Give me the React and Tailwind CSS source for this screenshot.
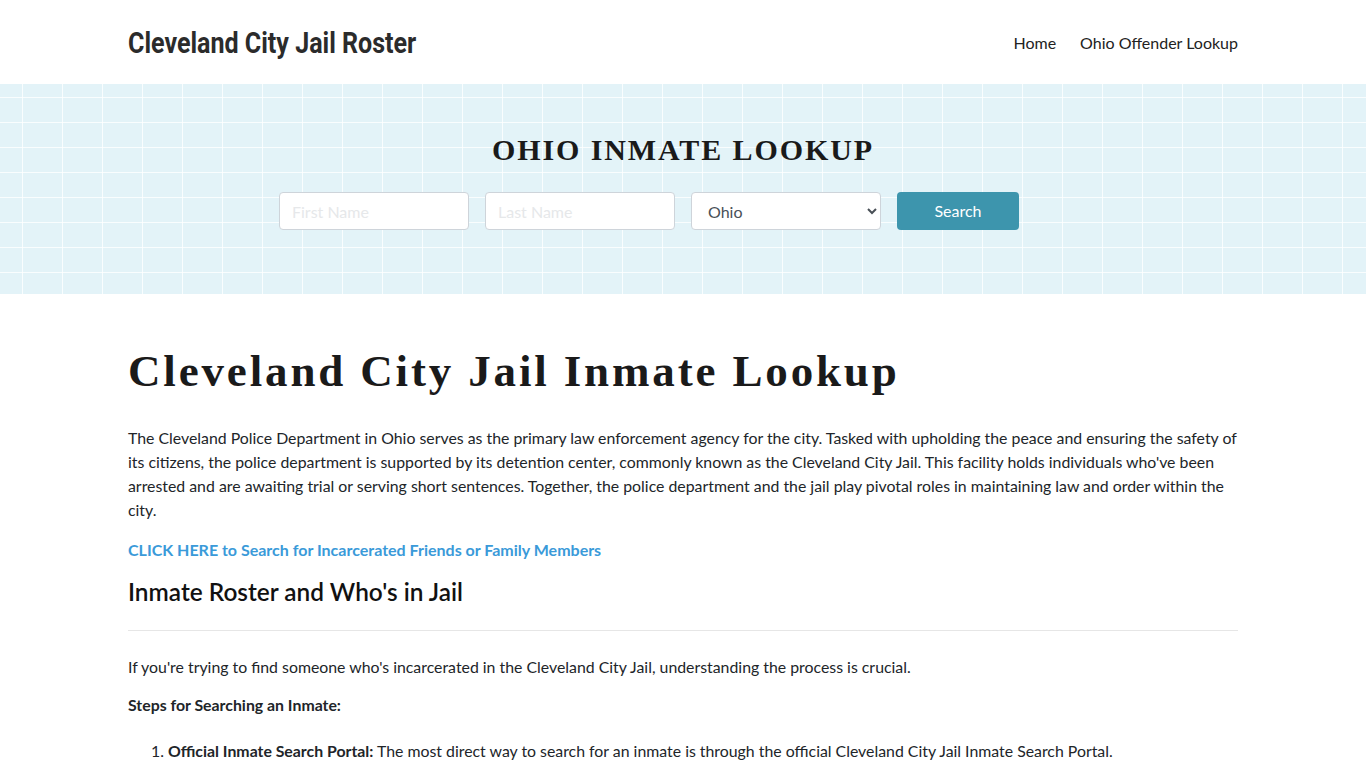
import React, { useState } from 'react';

const lato = "font-['Lato','Liberation_Sans',sans-serif]";
const serif = "font-['Liberation_Serif','DejaVu_Serif',serif]";

const Header = () => (
  <header className="bg-white">
    <div className="max-w-[1140px] mx-auto px-[15px] h-[84px] flex items-center justify-between">
      <a
        href="#"
        className="inline-block origin-left scale-x-[0.835] font-['Roboto','Liberation_Sans',sans-serif] font-bold text-[30px] leading-[34px] mt-[2px] text-[#2b2b2b] whitespace-nowrap"
      >
        Cleveland City Jail Roster
      </a>
      <nav className={`${lato} flex items-center gap-[24px] text-[16px] text-[#222] mt-[2px]`}>
        <a href="#">Home</a>
        <a href="#">Ohio Offender Lookup</a>
      </nav>
    </div>
  </header>
);

const SearchHero = () => {
  const [first, setFirst] = useState('');
  const [last, setLast] = useState('');
  const [state, setState] = useState('Ohio');

  const field =
    'w-[190px] h-[38px] px-3 bg-white border border-[#ced4da] rounded-[4px] text-[16px] text-[#495057] placeholder:text-[#e6e8ea] outline-none';

  return (
    <section className="bg-[#e3f3f8] bg-[linear-gradient(to_right,rgba(255,255,255,0.8)_1px,transparent_1px),linear-gradient(to_bottom,rgba(255,255,255,0.8)_1px,transparent_1px)] bg-[size:40px_25px] bg-[position:22px_13px] h-[210px] pt-[50px]">
      <h2 className={`${serif} text-center font-bold text-[30px] leading-[32px] tracking-[1.9px] text-[#1a1a1a]`}>
        OHIO INMATE LOOKUP
      </h2>
      <form
        className={`${lato} mt-[26px] flex justify-center gap-4 pr-[68px]`}
        onSubmit={(e) => e.preventDefault()}
      >
        <input
          className={field}
          placeholder="First Name"
          value={first}
          onChange={(e) => setFirst(e.target.value)}
        />
        <input
          className={field}
          placeholder="Last Name"
          value={last}
          onChange={(e) => setLast(e.target.value)}
        />
        <select
          className={`${field} pl-[12px]`}
          value={state}
          onChange={(e) => setState(e.target.value)}
        >
          <option>Ohio</option>
          <option>Michigan</option>
          <option>Pennsylvania</option>
        </select>
        <button
          type="submit"
          className="w-[122px] h-[38px] bg-[#3d95ad] text-white text-[16px] rounded-[4px]"
        >
          Search
        </button>
      </form>
    </section>
  );
};

const Article = () => (
  <main className={`${lato} max-w-[1140px] mx-auto px-[15px] pt-[50px] text-[15.85px] leading-[24px] text-[#212529]`}>
    <h1 className={`${serif} font-bold text-[45px] leading-[54px] tracking-[2.85px] text-[#1a1a1a]`}>
      Cleveland City Jail Inmate Lookup
    </h1>
    <p className="mt-[28px]">
      The Cleveland Police Department in Ohio serves as the primary law enforcement agency for the city. Tasked with
      upholding the peace and ensuring the safety of its citizens, the police department is supported by its detention
      center, commonly known as the Cleveland City Jail. This facility holds individuals who've been arrested and are
      awaiting trial or serving short sentences. Together, the police department and the jail play pivotal roles in
      maintaining law and order within the city.
    </p>
    <p className="mt-4">
      <a href="#" className="font-bold text-[16px] text-[#3a9ad9]">
        CLICK HERE to Search for Incarcerated Friends or Family Members
      </a>
    </p>
    <h2 className="mt-[12px] text-[24.4px] leading-[36px] font-semibold text-[#111]">
      Inmate Roster and Who's in Jail
    </h2>
    <hr className="mt-[20px] border-t border-[#e6e6e6]" />
    <p className="mt-[24px]">
      If you're trying to find someone who's incarcerated in the Cleveland City Jail, understanding the process is
      crucial.
    </p>
    <p className="mt-[14px] font-bold">Steps for Searching an Inmate:</p>
    <ol className="mt-[22px] pl-[40px] list-decimal">
      <li>
        <strong>Official Inmate Search Portal:</strong> The most direct way to search for an inmate is through the
        official Cleveland City Jail Inmate Search Portal.
      </li>
    </ol>
  </main>
);

export default function App() {
  return (
    <div className="min-h-screen bg-white">
      <Header />
      <SearchHero />
      <Article />
    </div>
  );
}
